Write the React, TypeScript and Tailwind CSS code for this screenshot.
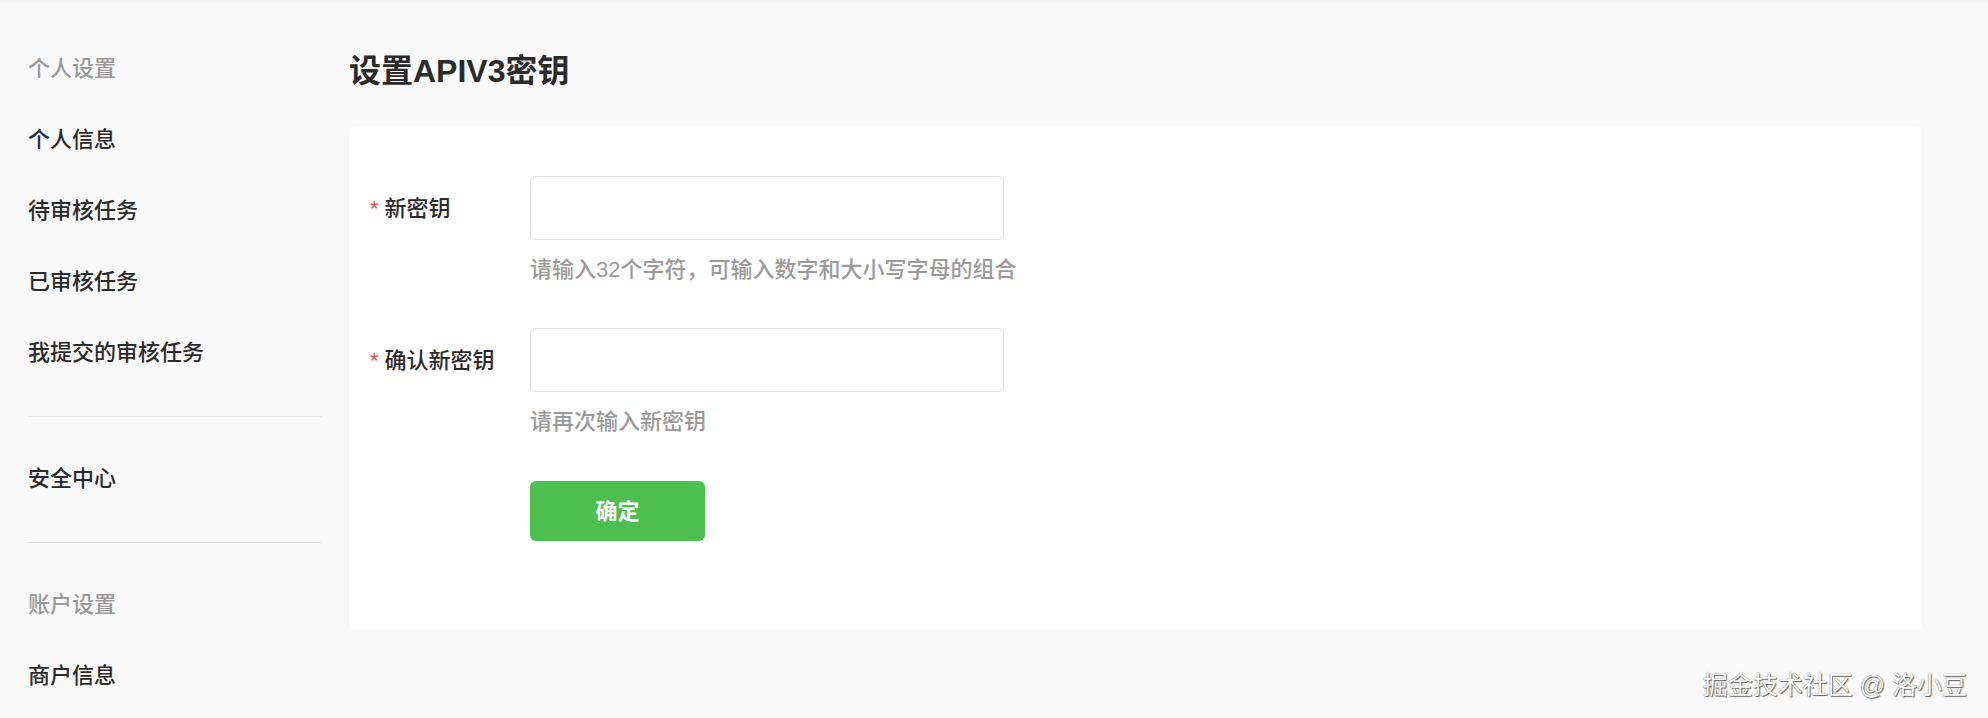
import { useState } from "react";

const FONT = "font-['Liberation_Sans','Noto_Sans_CJK_SC',sans-serif]";

type NavEntry = { kind: "group" | "item" | "divider"; label?: string };

const NAV: NavEntry[] = [
  { kind: "group", label: "个人设置" },
  { kind: "item", label: "个人信息" },
  { kind: "item", label: "待审核任务" },
  { kind: "item", label: "已审核任务" },
  { kind: "item", label: "我提交的审核任务" },
  { kind: "divider" },
  { kind: "item", label: "安全中心" },
  { kind: "divider" },
  { kind: "group", label: "账户设置" },
  { kind: "item", label: "商户信息" },
];

function Sidebar() {
  return (
    <aside className="w-[321px] shrink-0 pl-[28px] pt-[29px]">
      {NAV.map((entry, i) => {
        if (entry.kind === "divider") {
          return <div key={i} className="mt-[28px] mb-[26px] h-px bg-[#e4e4e4]" />;
        }
        return (
          <div
            key={i}
            className={`flex h-[71px] items-center text-[22px] font-medium ${
              entry.kind === "group" ? "text-[#9a9a9a]" : "text-[#2b2b2b]"
            }`}
          >
            {entry.label}
          </div>
        );
      })}
    </aside>
  );
}

interface FieldProps {
  label: string;
  hint: string;
  value: string;
  onChange: (v: string) => void;
}

function Field({ label, hint, value, onChange }: FieldProps) {
  return (
    <div className="flex">
      <div className="flex h-[64px] w-[160px] shrink-0 items-center text-[22px] font-medium text-[#2b2b2b]">
        <span className="mr-[6px] text-[#e5484d]">*</span>
        {label}
      </div>
      <div>
        <input
          type="password"
          value={value}
          onChange={(e) => onChange(e.target.value)}
          className="block h-[64px] w-[474px] rounded-[6px] border border-[#dcdfe6] bg-white px-4 text-[22px] outline-none"
        />
        <p className="mt-[15px] text-[22px] leading-[30px] font-medium text-[#9b9b9b]">{hint}</p>
      </div>
    </div>
  );
}

export default function App() {
  const [key, setKey] = useState("");
  const [confirmKey, setConfirmKey] = useState("");

  return (
    <div className={`relative min-h-screen bg-[#f9f9f9] ${FONT}`}>
      <div className="h-[4px] bg-gradient-to-b from-[#efefef] to-[#f7f7f7]" />
      <div className="flex">
        <Sidebar />
        <main className="min-w-0 flex-1 pt-[47px] pl-[28px] pr-[66px]">
          <h1 className="text-[32px] leading-[40px] font-semibold text-[#2b2b2b]">设置APIV3密钥</h1>
          <div className="mt-[35px] rounded-[6px] bg-white pt-[50px] pb-[89px] pl-[21px]">
            <Field label="新密钥" hint="请输入32个字符，可输入数字和大小写字母的组合" value={key} onChange={setKey} />
            <div className="mt-[43px]">
              <Field label="确认新密钥" hint="请再次输入新密钥" value={confirmKey} onChange={setConfirmKey} />
            </div>
            <div className="mt-[44px] pl-[160px]">
              <button
                type="button"
                className="h-[60px] w-[175px] rounded-[6px] bg-[#4cbf50] text-[22px] font-bold text-white"
              >
                确定
              </button>
            </div>
          </div>
        </main>
      </div>
      <div className="absolute right-[21px] top-[668px] text-[25px] leading-[34px] text-white [text-shadow:0_0_1px_#444,1px_1px_1px_#666]">
        掘金技术社区 @ 洛小豆
      </div>
    </div>
  );
}
